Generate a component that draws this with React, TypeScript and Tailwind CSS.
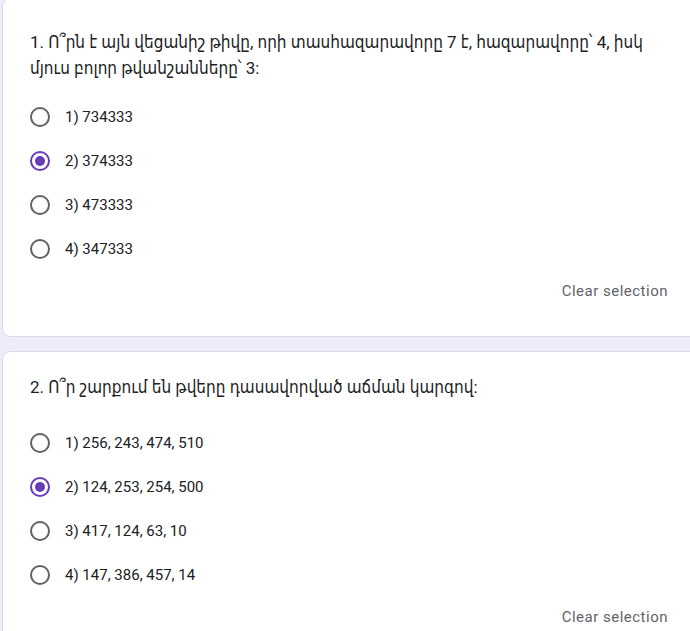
import React from "react";

type Q = { title: string; options: string[]; selected: number };

const questions: Q[] = [
  {
    title:
      "1. Ո՞րն է այն վեցանիշ թիվը, որի տասհազարավորը 7 է, հազարավորը՝ 4, իսկ մյուս բոլոր թվանշանները՝ 3:",
    options: ["1) 734333", "2) 374333", "3) 473333", "4) 347333"],
    selected: 1,
  },
  {
    title: "2. Ո՞ր շարքում են թվերը դասավորված աճման կարգով:",
    options: [
      "1) 256, 243, 474, 510",
      "2) 124, 253, 254, 500",
      "3) 417, 124, 63, 10",
      "4) 147, 386, 457, 14",
    ],
    selected: 1,
  },
];

function Radio({ checked }: { checked: boolean }) {
  return checked ? (
    <div className="w-5 h-5 rounded-full border-2 border-[#673ab7] flex items-center justify-center shrink-0">
      <div className="w-[10px] h-[10px] rounded-full bg-[#673ab7]" />
    </div>
  ) : (
    <div className="w-5 h-5 rounded-full border-2 border-[#5f6368] shrink-0" />
  );
}

function Card({ q, first }: { q: Q; first: boolean }) {
  return (
    <div
      className={
        "w-[700px] ml-[2px] bg-white border border-[#dadce0] rounded-lg pl-[27px] pr-[33px] shrink-0 " +
        (first ? "mt-[-2px] pt-[30px] pb-[35px]" : "pt-[22px] pb-[10px]")
      }
    >
      <div
        className="text-[17px] leading-[26px] text-[#202124]"
        style={{ fontFamily: "Roboto, 'DejaVu Sans Condensed', 'DejaVu Sans', sans-serif" }}
      >
        {q.title}
      </div>
      <div className={first ? "mt-[14px]" : "mt-[21px]"}>
        {q.options.map((o, i) => (
          <div key={i} className="h-[44px] flex items-center">
            <Radio checked={i === q.selected} />
            <span
              className="ml-[15px] text-[15px] text-[#202124]"
              style={{ fontFamily: "Roboto, sans-serif" }}
            >
              {o}
            </span>
          </div>
        ))}
      </div>
      <div className="flex justify-end mt-[10px]">
        <span
          className="text-[15px] text-[#5f6368] tracking-[0.5px] leading-[20px]"
          style={{ fontFamily: "Roboto, sans-serif" }}
        >
          Clear selection
        </span>
      </div>
    </div>
  );
}

export default function App() {
  return (
    <div className="w-[690px] h-[631px] overflow-hidden bg-[#efebf8] flex flex-col gap-[14px]">
      {questions.map((q, i) => (
        <Card key={i} q={q} first={i === 0} />
      ))}
    </div>
  );
}
